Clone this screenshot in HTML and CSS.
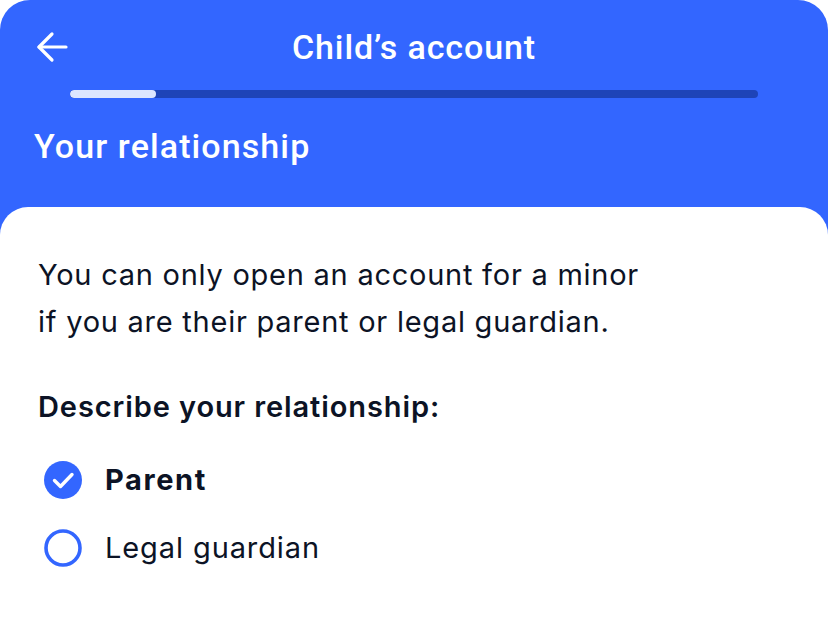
FILE: index.html
```html
<!DOCTYPE html>
<html lang="en">
<head>
<meta charset="utf-8">
<title>Child's account</title>
<link rel="stylesheet" href="styles.css">
</head>
<body>
<div class="screen">
  <header class="topbar">
    <div class="nav-row">
      <button class="back" aria-label="Back">
        <svg width="32" height="32" viewBox="0 0 32 32" fill="none" stroke="#fff" stroke-width="3.2" stroke-linecap="round" stroke-linejoin="round">
          <path d="M30 16H3"/>
          <path d="M16 3L3 16l13 13"/>
        </svg>
      </button>
      <h2 class="nav-title">Child’s account</h2>
    </div>
    <div class="progress"><div class="progress-fill" style="width:12.5%"></div></div>
    <h1 class="section-title">Your relationship</h1>
  </header>
  <main class="card">
    <p class="intro">You can only open an account for a minor<br>if you are their parent or legal guardian.</p>
    <p class="question">Describe your relationship:</p>
    <ul class="options">
      <li class="option selected">
        <span class="radio">
          <svg width="38" height="38" viewBox="0 0 38 38">
            <circle cx="19" cy="19" r="19" fill="#3366ff"/>
            <path d="M10.5 19.5l6 6L28 13.5" fill="none" stroke="#fff" stroke-width="3.4" stroke-linecap="round" stroke-linejoin="round"/>
          </svg>
        </span>
        <span class="label">Parent</span>
      </li>
      <li class="option">
        <span class="radio">
          <svg width="38" height="38" viewBox="0 0 38 38">
            <circle cx="19" cy="19" r="17" fill="none" stroke="#3366ff" stroke-width="3.6"/>
          </svg>
        </span>
        <span class="label">Legal guardian</span>
      </li>
    </ul>
  </main>
</div>
</body>
</html>
```

FILE: styles.css
```css
* { box-sizing: border-box; }
html, body { margin: 0; padding: 0; background: #ffffff; }
body { width: 828px; height: 621px; overflow: hidden; }

.screen {
  width: 828px;
  height: 621px;
  background: #3366ff;
  border-radius: 30px 30px 0 0;
  overflow: hidden;
  display: flex;
  flex-direction: column;
}

.topbar {
  color: #ffffff;
  font-family: Roboto, "Liberation Sans", sans-serif;
}

.nav-row {
  position: relative;
  height: 44px;
  margin-top: 25px;
  display: flex;
  align-items: center;
  justify-content: center;
}

.back {
  position: absolute;
  left: 36px;
  top: 6px;
  width: 32px;
  height: 32px;
  padding: 0;
  border: 0;
  background: transparent;
  display: flex;
}

.nav-title {
  margin: 0;
  font-size: 34px;
  font-weight: 500;
  line-height: 44px;
  letter-spacing: 0.9px;
}

.progress {
  margin: 21px 70px 0;
  height: 8px;
  border-radius: 4px;
  background: #1e44b8;
  overflow: hidden;
}

.progress-fill {
  height: 100%;
  border-radius: 4px;
  background: #dce6ff;
}

.section-title {
  margin: 28px 0 0 34px;
  padding-bottom: 41px;
  font-size: 34px;
  font-weight: 500;
  line-height: 40px;
  letter-spacing: 1.1px;
}

.card {
  flex: 1;
  background: #ffffff;
  border-radius: 28px 28px 0 0;
  padding: 44px 38px 0;
  color: #0c1325;
  font-family: Inter, "Liberation Sans", sans-serif;
}

.intro {
  margin: 0;
  font-size: 29px;
  line-height: 47px;
  font-weight: 400;
  letter-spacing: 0.75px;
}

.question {
  margin: 38px 0 0;
  font-size: 29px;
  line-height: 47px;
  font-weight: 600;
  letter-spacing: 0.9px;
}

.options {
  list-style: none;
  margin: 26px 0 0;
  padding: 0;
  display: flex;
  flex-direction: column;
  gap: 20px;
}

.option {
  display: flex;
  align-items: center;
  height: 48px;
  gap: 17px;
}

.radio {
  width: 50px;
  display: flex;
  justify-content: center;
}

.label {
  font-size: 29px;
  line-height: 48px;
  letter-spacing: 0.9px;
}

.selected .label { font-weight: 700; letter-spacing: 1.6px; }
```
